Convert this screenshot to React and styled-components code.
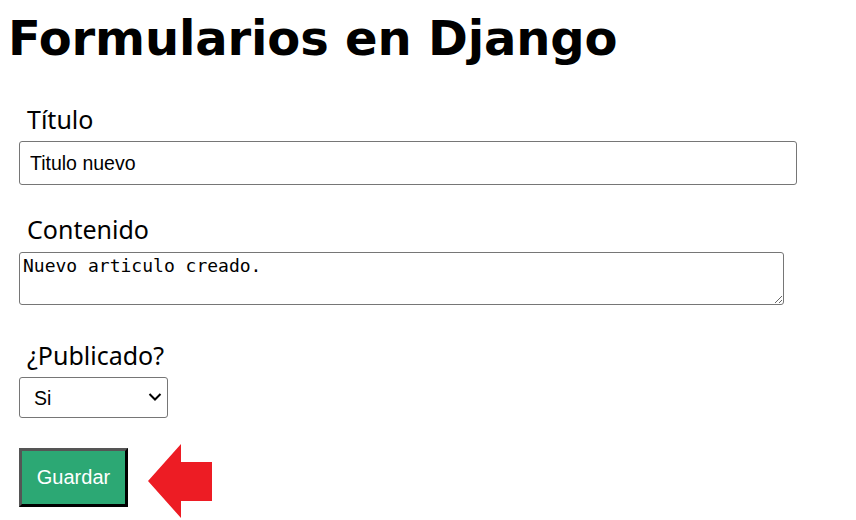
import styled, { createGlobalStyle } from 'styled-components';

const GlobalStyle = createGlobalStyle`
  body {
    margin: 8px;
    background: #ffffff;
    color: #000000;
  }
`;

const Page = styled.div`
  display: flex;
  flex-direction: column;
`;

const Title = styled.h1`
  margin: 2px 0 0;
  font-family: "DejaVu Sans", Verdana, sans-serif;
  font-weight: bold;
  font-size: 48px;
  line-height: 56px;
  letter-spacing: -0.15px;
  color: #000;
`;

const Form = styled.form`
  display: flex;
  flex-direction: column;
  padding: 0 11px;
`;

const Field = styled.div`
  display: flex;
  flex-direction: column;
  align-items: flex-start;
  margin-top: ${({ $top }) => $top}px;
`;

const Label = styled.label`
  margin: 0 0 7px 8px;
  font-family: "Noto Sans", "Open Sans", sans-serif;
  font-size: 25px;
  line-height: 30px;
  color: #000;
`;

const TextInput = styled.input`
  box-sizing: border-box;
  width: 778px;
  height: 44px;
  padding: 0 10px;
  border: 1px solid #767676;
  border-radius: 3px;
  font-family: "Liberation Sans", Arial, sans-serif;
  font-size: 19.5px;
  color: #000;
  background: #fff;
`;

const TextArea = styled.textarea`
  box-sizing: border-box;
  display: block;
  width: 765px;
  height: 53px;
  margin-top: 1px;
  padding: 2px 3px;
  border: 1px solid #767676;
  border-radius: 3px;
  font-family: "DejaVu Sans Mono", "Liberation Mono", monospace;
  font-size: 18px;
  line-height: 22px;
  color: #000;
  background: #fff;
`;

const SelectWrap = styled.div`
  position: relative;
  display: inline-flex;
`;

const Select = styled.select`
  box-sizing: border-box;
  width: 149px;
  height: 41px;
  padding: 0 28px 0 14px;
  border: 1px solid #767676;
  border-radius: 3px;
  appearance: none;
  font-family: "Liberation Sans", Arial, sans-serif;
  font-size: 19.5px;
  color: #000;
  background: #fff;
`;

const Chevron = styled.svg`
  position: absolute;
  right: 6px;
  top: 15px;
  pointer-events: none;
`;

const Actions = styled.div`
  display: flex;
  align-items: flex-start;
  gap: 20px;
  margin-top: 30px;
`;

const SaveButton = styled.button`
  box-sizing: border-box;
  width: 109px;
  height: 59px;
  padding: 0;
  border: 3px outset #555;
  border-right-color: #000;
  border-bottom-color: #000;
  background: #2ca874;
  font-family: "Liberation Sans", Arial, sans-serif;
  font-size: 20px;
  color: #fff;
  cursor: pointer;
`;

const Arrow = styled.svg`
  flex: none;
  margin-top: -5px;
`;

const App = () => {
  return (
    <Page>
      <GlobalStyle />
      <Title>Formularios en Django</Title>
      <Form onSubmit={(e) => e.preventDefault()}>
        <Field $top={38}>
          <Label htmlFor="titulo">Título</Label>
          <TextInput id="titulo" type="text" defaultValue="Titulo nuevo" />
        </Field>
        <Field $top={29}>
          <Label htmlFor="contenido">Contenido</Label>
          <TextArea id="contenido" defaultValue="Nuevo articulo creado." />
        </Field>
        <Field $top={35}>
          <Label htmlFor="publicado">¿Publicado?</Label>
          <SelectWrap>
            <Select id="publicado" defaultValue="si">
              <option value="si">Si</option>
              <option value="no">No</option>
            </Select>
            <Chevron width="14" height="10" viewBox="0 0 14 10">
              <polyline points="1.5,2 7,7.5 12.5,2" fill="none" stroke="#000" strokeWidth="2" />
            </Chevron>
          </SelectWrap>
        </Field>
        <Actions>
          <SaveButton type="submit">Guardar</SaveButton>
          <Arrow width="64" height="76" viewBox="0 0 64 76">
            <polygon points="0,38 33,1 33,19 64,19 64,58 33,58 33,75" fill="#ed1c24" />
          </Arrow>
        </Actions>
      </Form>
    </Page>
  );
};

export default App;
